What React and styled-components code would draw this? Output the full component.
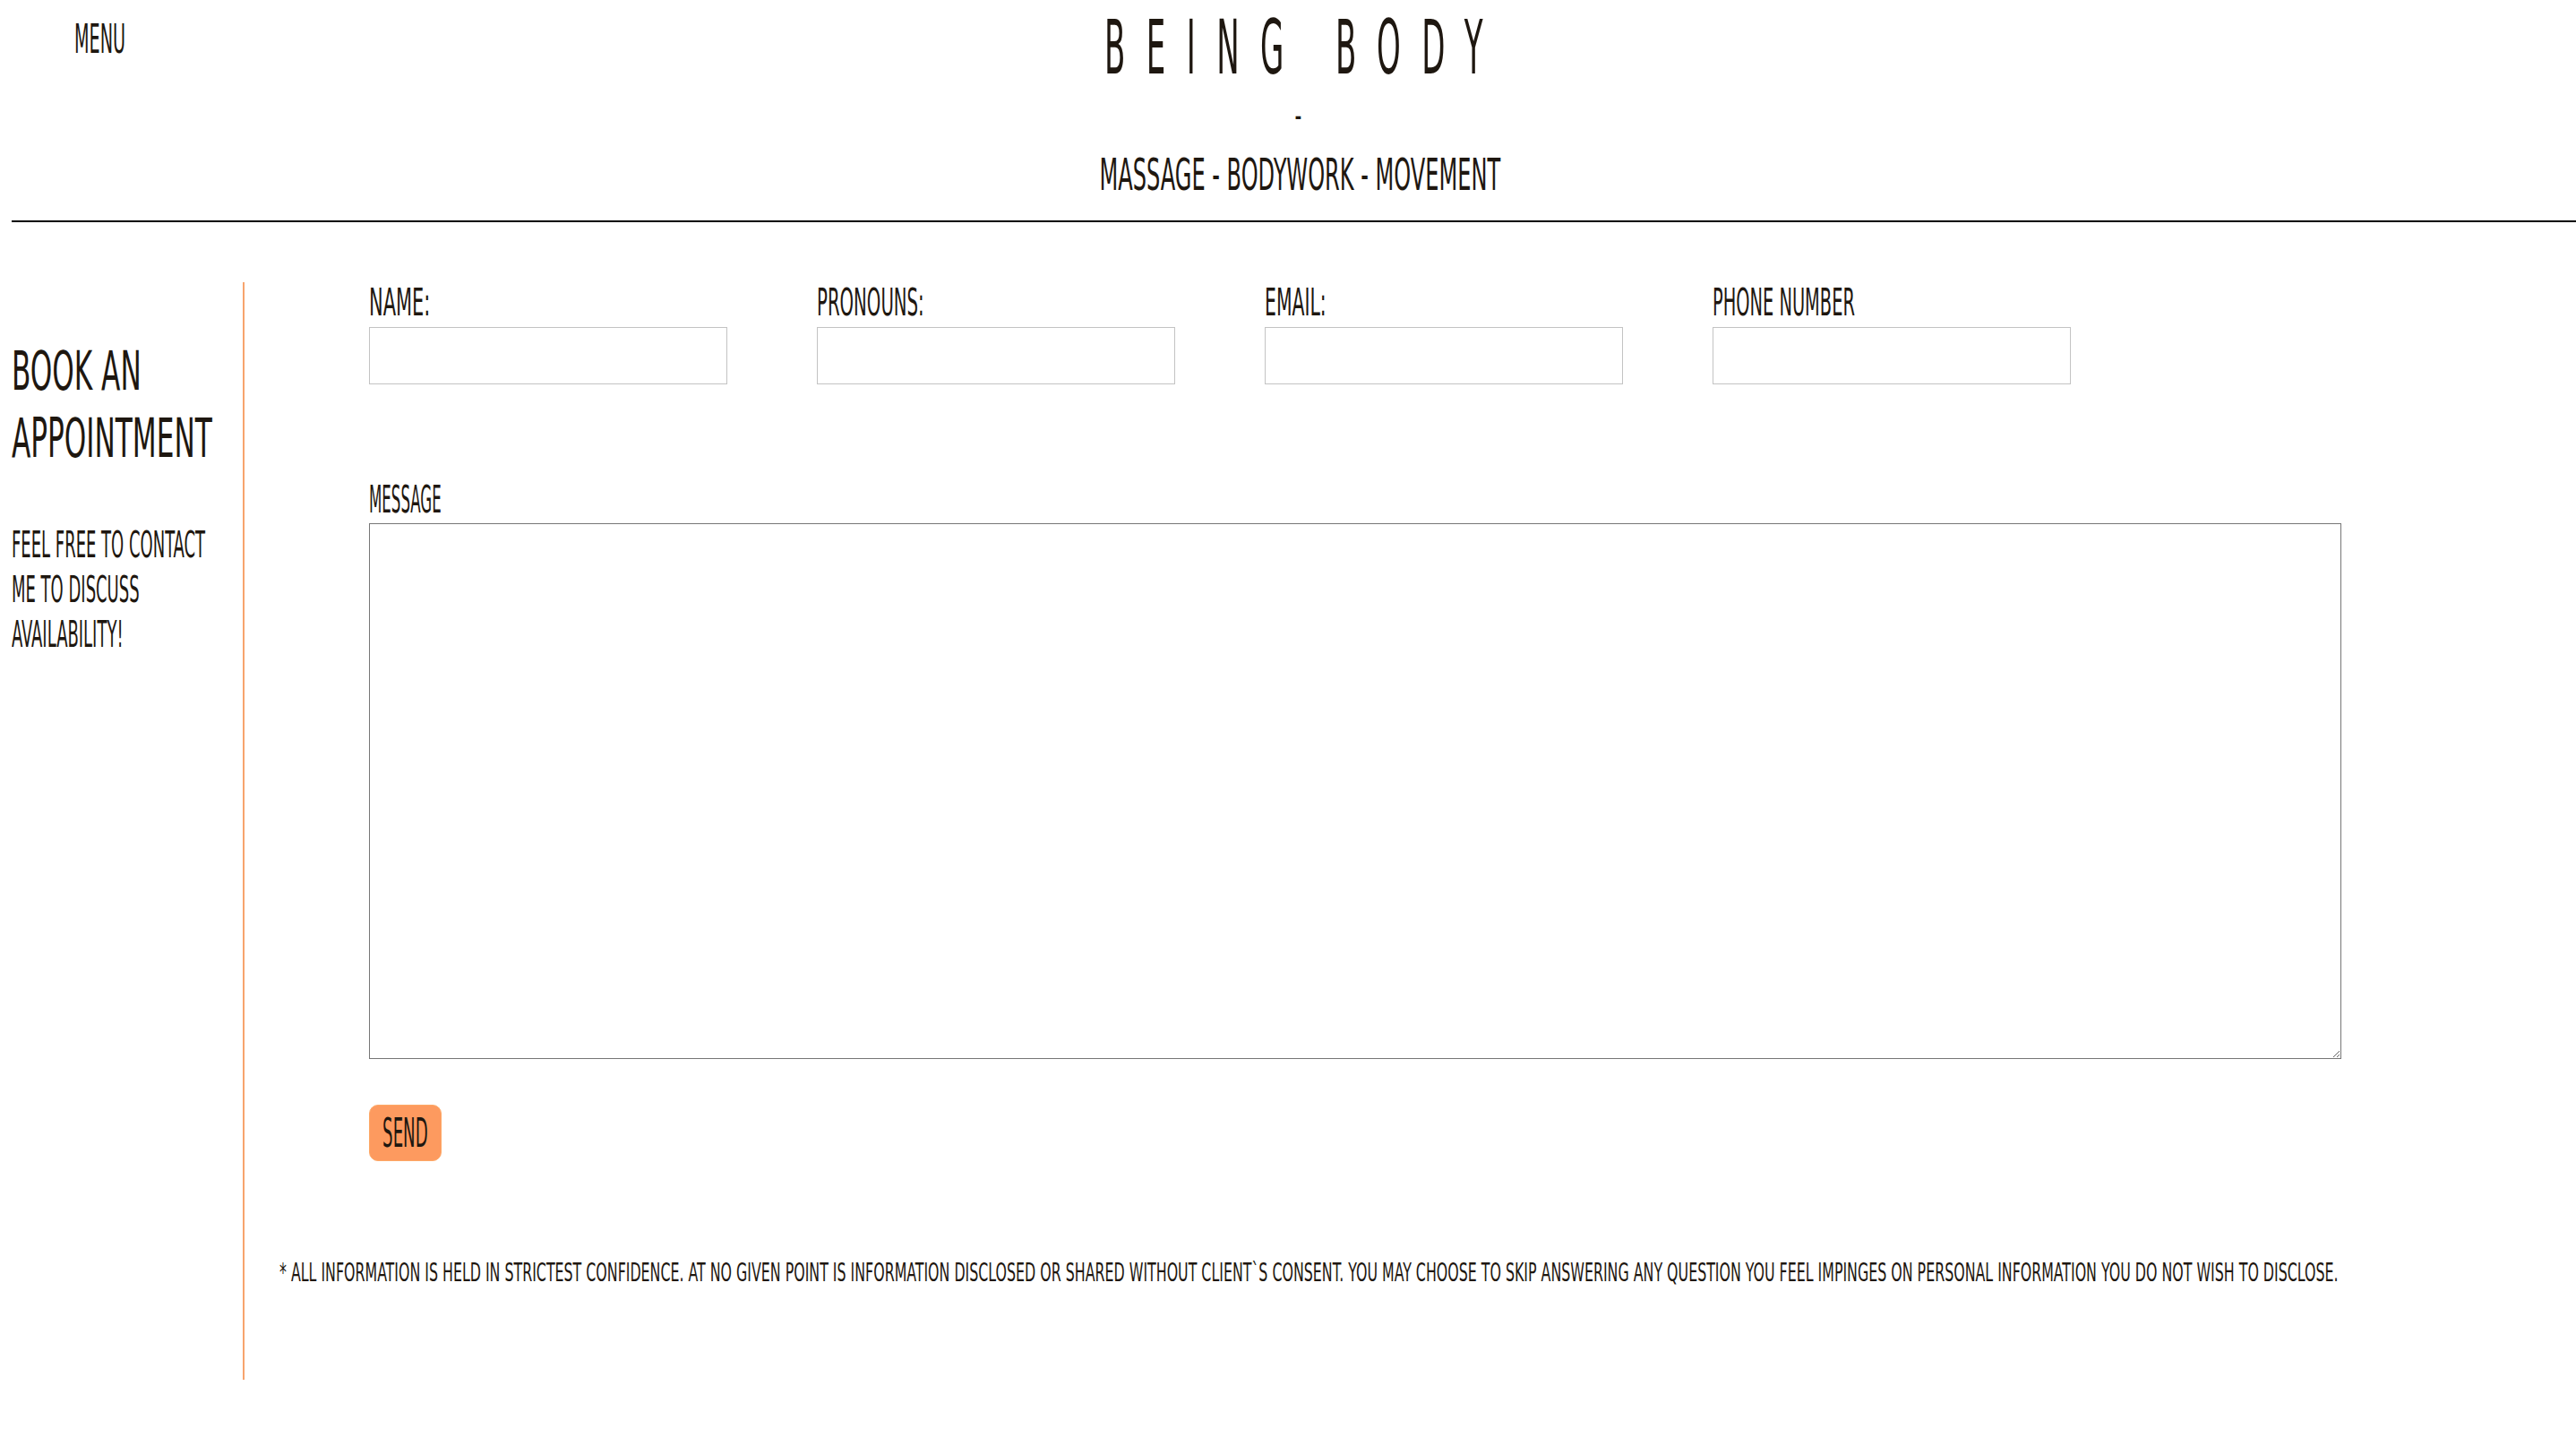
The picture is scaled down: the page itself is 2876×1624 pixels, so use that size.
import React from "react";
import styled, { createGlobalStyle, css } from "styled-components";

const GlobalStyle = createGlobalStyle`
  html, body {
    margin: 0;
    padding: 0;
    background: #fff;
    overflow-x: hidden;
  }
  body {
    font-family: "Liberation Sans Narrow", "DejaVu Sans Condensed", "Liberation Sans", sans-serif;
    color: #1e1710;
  }
`;

// the reference font is a very narrow hand-drawn face, so text gets squeezed sideways
const squeeze = css`
  transform: scaleX(${(p) => p.$k});
  transform-origin: ${(p) => p.$origin || "left"} center;
`;

const App = () => {
  return (
    <>
      <GlobalStyle />
      <Page>
        <Header>
          <MenuCell>
            <MenuLink href="#" $k={0.474}>
              MENU
            </MenuLink>
          </MenuCell>
          <Brand>
            <Title $k={0.45} $origin="center">
              Being Body
            </Title>
            <Dash $k={0.6} $origin="center">
              -
            </Dash>
            <Tagline $k={0.535} $origin="center">
              Massage - Bodywork - Movement
            </Tagline>
          </Brand>
          <div />
        </Header>

        <Main>
          <Sidebar>
            <SideTitle $k={0.577}>Book an appointment</SideTitle>
            <SideNote $k={0.5}>Feel Free to contact me to discuss availability!</SideNote>
          </Sidebar>

          <FormArea>
            <Fields>
              <FieldRow>
                <Field>
                  <Label $k={0.555}>Name:</Label>
                  <TextInput type="text" />
                </Field>
                <Field>
                  <Label $k={0.522}>Pronouns:</Label>
                  <TextInput type="text" />
                </Field>
                <Field>
                  <Label $k={0.54}>Email:</Label>
                  <TextInput type="email" />
                </Field>
                <Field>
                  <Label $k={0.513}>Phone Number</Label>
                  <TextInput type="tel" />
                </Field>
              </FieldRow>

              <MessageField>
                <Label $k={0.44}>Message</Label>
                <Message />
              </MessageField>

              <SendButton type="button">
                <SendText $k={0.448} $origin="center">
                  Send
                </SendText>
              </SendButton>
            </Fields>

            <Disclaimer>
              * All information is held in strictest confidence. At no given point is
              information disclosed or shared without client`s consent. You may choose to
              skip answering any question you feel impinges on personal information you do
              not wish to disclose.
            </Disclaimer>
          </FormArea>
        </Main>
      </Page>
    </>
  );
};

export default App;

const Page = styled.div`
  padding-left: 13px;
  min-height: 1624px;
  box-sizing: border-box;
`;

const Header = styled.header`
  display: grid;
  grid-template-columns: 1fr auto 1fr;
  border-bottom: 2px solid #000;
  padding-bottom: 26px;
`;

const MenuCell = styled.div`
  padding: 21px 0 0 70px;
`;

const MenuLink = styled.a`
  display: inline-block;
  font-size: 45px;
  line-height: 1;
  color: #1e1710;
  text-decoration: none;
  ${squeeze}
`;

const Brand = styled.div`
  display: flex;
  flex-direction: column;
  align-items: center;
  padding-top: 11px;
`;

const Title = styled.h1`
  margin: 0;
  padding-left: 52px;
  font-size: 84px;
  font-weight: normal;
  line-height: 1;
  letter-spacing: 52px;
  text-transform: uppercase;
  white-space: nowrap;
  ${squeeze}
`;

const Dash = styled.div`
  margin: 14px 0 0 10px;
  font-size: 40px;
  line-height: 1;
  ${squeeze}
`;

const Tagline = styled.div`
  margin: 21px 0 0 14px;
  font-size: 50px;
  line-height: 1;
  text-transform: uppercase;
  white-space: nowrap;
  ${squeeze}
`;

const Main = styled.main`
  display: flex;
  margin-top: 67px;
`;

const Sidebar = styled.aside`
  flex: 0 0 258px;
  width: 258px;
  min-width: 0;
  border-right: 2px solid #f7a46d;
`;

const SideTitle = styled.h2`
  margin: 62px 0 0;
  width: calc(258px / ${(p) => p.$k});
  font-size: 60px;
  font-weight: normal;
  line-height: 75px;
  text-transform: uppercase;
  transform: scaleX(${(p) => p.$k});
  transform-origin: left top;
`;

const SideNote = styled.p`
  margin: 56px 0 0;
  width: calc(232px / ${(p) => p.$k});
  font-size: 40px;
  line-height: 50px;
  text-transform: uppercase;
  transform: scaleX(${(p) => p.$k});
  transform-origin: left top;
`;

const FormArea = styled.section`
  flex: 1;
  min-width: 0;
  padding: 2px 0 109px 39px;
`;

const Fields = styled.div`
  margin-left: 100px;
  display: flex;
  flex-direction: column;
  align-items: flex-start;
`;

const FieldRow = styled.div`
  display: flex;
  gap: 100px;
`;

const Field = styled.div`
  display: flex;
  flex-direction: column;
  align-items: flex-start;
  gap: 6px;
`;

const Label = styled.label`
  display: inline-block;
  font-size: 42px;
  line-height: 1;
  text-transform: uppercase;
  white-space: nowrap;
  ${squeeze}
`;

const TextInput = styled.input`
  box-sizing: border-box;
  width: 400px;
  height: 64px;
  margin: 0;
  border: 1px solid #c3c3c3;
  background: #fff;
  outline: none;
`;

const MessageField = styled.div`
  display: flex;
  flex-direction: column;
  align-items: flex-start;
  gap: 5px;
  margin-top: 108px;
`;

const Message = styled.textarea`
  display: block;
  box-sizing: border-box;
  width: 2202px;
  height: 598px;
  margin: 0;
  border: 1px solid #767676;
  background: #fff;
`;

const SendButton = styled.button`
  display: flex;
  align-items: center;
  justify-content: center;
  width: 81px;
  height: 63px;
  margin-top: 51px;
  padding: 0;
  border: 1px solid #fda866;
  border-radius: 10px;
  background: #fd9a5f;
  color: #1e1710;
  font-family: inherit;
  cursor: pointer;
`;

const SendText = styled.span`
  display: inline-block;
  font-size: 45px;
  line-height: 1;
  text-transform: uppercase;
  white-space: nowrap;
  ${squeeze}
`;

/* one long line: set small enough to fit, then stretched tall */
const Disclaimer = styled.p`
  display: inline-block;
  margin: 117px 0 0;
  font-size: 17.6px;
  line-height: 1;
  text-transform: uppercase;
  white-space: nowrap;
  transform: scaleY(1.645);
  transform-origin: left center;
`;
